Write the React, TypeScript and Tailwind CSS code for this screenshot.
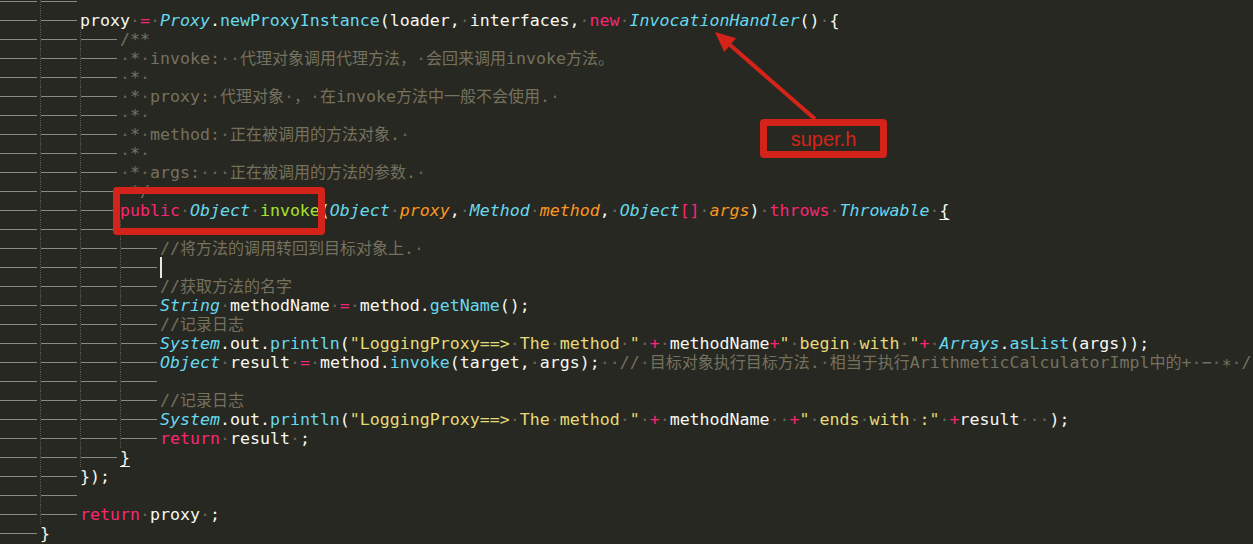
import React from "react";

// Monokai-ish palette
const W = "text-[#f8f8f2]";
const P = "text-[#f92672]";
const T = "text-[#66d9ef] italic";
const F = "text-[#66d9ef]";
const G = "text-[#a6e22e]";
const A = "text-[#fd971f] italic";
const Y = "text-[#e6db74]";
const K = "text-[#75715e]";
const U = "text-[#f8f8f2] underline underline-offset-[3px] decoration-1";

type Seg = [string, string];
type Line = { tabs: number; segs: Seg[]; cursor?: boolean };

const lines: Line[] = [
	{ tabs: 2, segs: [] },
	{
		tabs: 2,
		segs: [
			["proxy ", W],
			["=", P],
			[" ", W],
			["Proxy", T],
			[".", W],
			["newProxyInstance", F],
			["(loader, interfaces, ", W],
			["new", P],
			[" ", W],
			["InvocationHandler", T],
			["() {", W],
		],
	},
	{ tabs: 3, segs: [["/**", K]] },
	{ tabs: 3, segs: [[" * invoke:  代理对象调用代理方法， 会回来调用invoke方法。", K]] },
	{ tabs: 3, segs: [[" * ", K]] },
	{ tabs: 3, segs: [[" * proxy: 代理对象 ， 在invoke方法中一般不会使用. ", K]] },
	{ tabs: 3, segs: [[" * ", K]] },
	{ tabs: 3, segs: [[" * method: 正在被调用的方法对象. ", K]] },
	{ tabs: 3, segs: [[" * ", K]] },
	{ tabs: 3, segs: [[" * args:   正在被调用的方法的参数. ", K]] },
	{ tabs: 3, segs: [[" */", K]] },
	{
		tabs: 3,
		segs: [
			["public", P],
			[" ", W],
			["Object", T],
			[" ", W],
			["invoke", G],
			["(", W],
			["Object", T],
			[" ", W],
			["proxy", A],
			[", ", W],
			["Method", T],
			[" ", W],
			["method", A],
			[", ", W],
			["Object", T],
			["[]", P],
			[" ", W],
			["args", A],
			[") ", W],
			["throws", P],
			[" ", W],
			["Throwable", T],
			[" ", W],
			["{", U],
		],
	},
	{ tabs: 4, segs: [] },
	{ tabs: 4, segs: [["//将方法的调用转回到目标对象上. ", K]] },
	{ tabs: 4, segs: [], cursor: true },
	{ tabs: 4, segs: [["//获取方法的名字", K]] },
	{
		tabs: 4,
		segs: [
			["String", T],
			[" methodName ", W],
			["=", P],
			[" method.", W],
			["getName", F],
			["();", W],
		],
	},
	{ tabs: 4, segs: [["//记录日志", K]] },
	{
		tabs: 4,
		segs: [
			["System", T],
			[".out.", W],
			["println", F],
			["(", W],
			['"LoggingProxy==> The method "', Y],
			[" ", W],
			["+", P],
			[" methodName", W],
			["+", P],
			['" begin with "', Y],
			["+", P],
			[" ", W],
			["Arrays", T],
			[".", W],
			["asList", F],
			["(args));", W],
		],
	},
	{
		tabs: 4,
		segs: [
			["Object", T],
			[" result ", W],
			["=", P],
			[" method.", W],
			["invoke", F],
			["(target, args);  ", W],
			["// 目标对象执行目标方法. 相当于执行ArithmeticCalculatorImpl中的+ − ∗ /", K],
		],
	},
	{ tabs: 4, segs: [] },
	{ tabs: 4, segs: [["//记录日志", K]] },
	{
		tabs: 4,
		segs: [
			["System", T],
			[".out.", W],
			["println", F],
			["(", W],
			['"LoggingProxy==> The method "', Y],
			[" ", W],
			["+", P],
			[" methodName  ", W],
			["+", P],
			['" ends with :"', Y],
			[" ", W],
			["+", P],
			["result   );", W],
		],
	},
	{
		tabs: 4,
		segs: [
			["return", P],
			[" result ;", W],
		],
	},
	{ tabs: 3, segs: [["}", U]] },
	{ tabs: 2, segs: [["});", W]] },
	{ tabs: 2, segs: [] },
	{
		tabs: 2,
		segs: [
			["return", P],
			[" proxy ;", W],
		],
	},
	{ tabs: 1, segs: [["}", W]] },
];

const CJK = /([\u3000-\u303f\u4e00-\u9fff\uff00-\uffef]+)/;

// CJK runs are a touch narrower than two mono cells in the editor
function Word({ text, cls }: { text: string; cls: string }) {
	const bits = text.split(CJK).filter(Boolean);
	return (
		<>
			{bits.map((b, i) =>
				CJK.test(b) ? (
					<span key={i} className={`${cls} text-[16px]`}>
						{b}
					</span>
				) : (
					<span key={i} className={cls}>
						{b}
					</span>
				)
			)}
		</>
	);
}

// spaces are drawn as dim dots, like draw_white_space
function Segment({ text, cls }: { text: string; cls: string }) {
	const parts = text.split(" ");
	return (
		<>
			{parts.map((p, i) => (
				<React.Fragment key={i}>
					{i > 0 && <span className="text-[#64645b] not-italic no-underline">·</span>}
					{p && <Word text={p} cls={cls} />}
				</React.Fragment>
			))}
		</>
	);
}

function Tab({ first }: { first: boolean }) {
	return (
		<span
			className={
				first
					? "flex h-full w-[40px] shrink-0 items-center pr-[3px]"
					: "flex h-full w-[40px] shrink-0 items-center border-l border-dotted border-[#5a5a52] pr-[3px]"
			}
		>
			<span className="h-px flex-1 bg-[#8a8a82]" />
		</span>
	);
}

export default function App() {
	return (
		<div className="relative h-[544px] w-full overflow-hidden bg-[#272822] font-['DejaVu_Sans_Mono','Noto_Sans_CJK_SC',monospace] text-[16.6px] leading-[19px]">
			<div className="-mt-2 flex flex-col">
				{lines.map((line, i) => (
					<div key={i} className="flex h-[19px] items-center whitespace-pre">
						{Array.from({ length: line.tabs }).map((_, k) => (
							<Tab key={k} first={k === 0} />
						))}
						{line.cursor && <span className="h-[21px] w-[2px] bg-[#e8e8e2]" />}
						{line.segs.map(([t, c], j) => (
							<Segment key={j} text={t} cls={c} />
						))}
					</div>
				))}
			</div>

			{/* annotations drawn over the code */}
			<div className="pointer-events-none absolute left-[113px] top-[187px] h-[48px] w-[212px] rounded-[4px] border-[7px] border-[#d42419]" />
			<div className="pointer-events-none absolute left-[760px] top-[119px] flex h-[39px] w-[127px] items-center justify-center rounded-[4px] border-[7px] border-[#d42419] font-['Liberation_Sans',Arial,sans-serif] text-[20px] leading-none text-[#d42419]">
				super.h
			</div>
			<svg className="pointer-events-none absolute left-0 top-0" width="1253" height="544">
				<line x1="815" y1="119" x2="729" y2="44" stroke="#d42419" strokeWidth="4" />
				<polygon points="715,32 724.2,51.9 736,38.3" fill="#d42419" />
			</svg>
		</div>
	);
}
